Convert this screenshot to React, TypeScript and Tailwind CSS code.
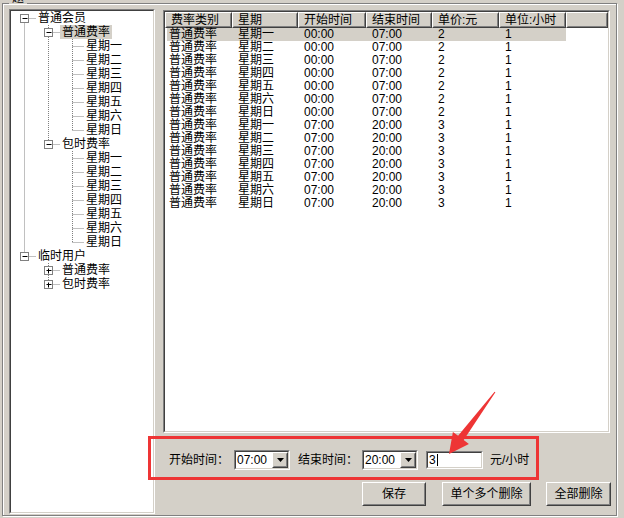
import type { ReactNode } from 'react'

const days = ['星期一', '星期二', '星期三', '星期四', '星期五', '星期六', '星期日']

interface TreeRow {
  level: 0 | 1 | 2
  label: string
  selected?: boolean
}

const treeRows: TreeRow[] = [
  { level: 0, label: '普通会员' },
  { level: 1, label: '普通费率', selected: true },
  ...days.map((d) => ({ level: 2 as const, label: d })),
  { level: 1, label: '包时费率' },
  ...days.map((d) => ({ level: 2 as const, label: d })),
  { level: 0, label: '临时用户' },
  { level: 1, label: '普通费率' },
  { level: 1, label: '包时费率' },
]

// expand boxes: [row, level, expanded]
const boxes: [number, number, boolean][] = [
  [0, 0, true],
  [1, 1, true],
  [9, 1, true],
  [17, 0, true],
  [18, 1, false],
  [19, 1, false],
]

const rates = [
  ...days.map((d) => ['普通费率', d, '00:00', '07:00', '2', '1']),
  ...days.map((d) => ['普通费率', d, '07:00', '20:00', '3', '1']),
]

const columns = [
  { title: '费率类别', w: 'w-[67px]', cw: 'w-[65px] pl-[2px]' },
  { title: '星期', w: 'w-[66px]', cw: 'w-[66px] pl-[6px]' },
  { title: '开始时间', w: 'w-[68px]', cw: 'w-[68px] pl-[6px]' },
  { title: '结束时间', w: 'w-[66px]', cw: 'w-[66px] pl-[6px]' },
  { title: '单价:元', w: 'w-[67px]', cw: 'w-[67px] pl-[6px]' },
  { title: '单位:小时', w: 'w-[67px]', cw: 'w-[67px] pl-[6px]' },
]

const Sunken = ({ className, children }: { className: string; children: ReactNode }) => (
  <div className={`border border-t-[#808080] border-l-[#808080] border-b-white border-r-white ${className}`}>
    <div className="h-full w-full border border-t-[#404040] border-l-[#404040] border-b-[#d4d0c8] border-r-[#d4d0c8]">
      {children}
    </div>
  </div>
)

const Raised = ({ className, children }: { className: string; children: ReactNode }) => (
  <div className={`border border-t-white border-l-white border-b-[#404040] border-r-[#404040] ${className}`}>
    <div className="flex h-full w-full items-center justify-center border border-t-transparent border-l-transparent border-b-[#808080] border-r-[#808080]">
      {children}
    </div>
  </div>
)

const TreeLines = () => {
  const cy = (i: number) => 7.5 + 14 * i
  const xs = [13.5, 37.5, 61.5]
  return (
    <svg className="absolute left-0 top-0" width="142" height="300">
      <g stroke="#808080" strokeWidth="1" strokeDasharray="1 1" fill="none">
        <line x1={xs[0]} y1={cy(0)} x2={xs[0]} y2={cy(17)} />
        <line x1={xs[1]} y1={14} x2={xs[1]} y2={cy(9)} />
        <line x1={xs[1]} y1={252} x2={xs[1]} y2={cy(19)} />
        <line x1={xs[2]} y1={28} x2={xs[2]} y2={cy(8)} />
        <line x1={xs[2]} y1={140} x2={xs[2]} y2={cy(16)} />
        {treeRows.map((r, i) => (
          <line key={i} x1={xs[r.level]} y1={cy(i)} x2={xs[r.level] + 12} y2={cy(i)} />
        ))}
      </g>
      {boxes.map(([row, level, open]) => {
        const x = xs[level]
        const y = cy(row)
        return (
          <g key={row}>
            <rect x={x - 4} y={y - 4} width="8" height="8" fill="#fff" stroke="#808080" />
            <line x1={x - 2} y1={y} x2={x + 3} y2={y} stroke="#000" />
            {!open && <line x1={x} y1={y - 2} x2={x} y2={y + 3} stroke="#000" />}
          </g>
        )
      })}
    </svg>
  )
}

const Combo = ({ value }: { value: string }) => (
  <Sunken className="h-[20px] w-[56px]">
    <div className="flex h-full items-center bg-white">
      <span className="flex-1 pl-[1px] leading-[16px]">{value}</span>
      <Raised className="h-[16px] w-[16px] bg-[#d4d0c8]">
        <svg width="7" height="4" viewBox="0 0 7 4">
          <path d="M0 0h7L3.5 4z" fill="#000" />
        </svg>
      </Raised>
    </div>
  </Sunken>
)

export default function App() {
  return (
    <div className="relative h-[518px] w-[624px] overflow-hidden bg-[#d4d0c8] pl-[2px] pt-[3px] font-['Liberation_Sans','Noto_Sans_CJK_SC',sans-serif] text-[12px] text-black">
      {/* group box */}
      <div className="relative flex h-[513px] w-[615px] items-start border border-[#808080] shadow-[inset_1px_1px_0_#fff,1px_1px_0_#fff]">
        <span className="absolute left-[6px] top-[-12px] bg-[#d4d0c8] px-[3px] leading-[12px]">题</span>

        {/* tree */}
        <Sunken className="ml-[6px] mt-[5px] h-[505px] w-[146px]">
          <div className="relative h-full bg-white">
            <TreeLines />
            <div className="relative">
              {treeRows.map((r, i) => (
                <div
                  key={i}
                  className={`flex h-[14px] items-center leading-[14px] ${
                    r.level === 0 ? 'pl-[25px]' : r.level === 1 ? 'pl-[49px]' : 'pl-[73px]'
                  }`}
                >
                  <span className={`px-[2px] ${r.selected ? 'bg-[#d4d0c8]' : ''}`}>{r.label}</span>
                </div>
              ))}
            </div>
          </div>
        </Sunken>

        {/* right side */}
        <div className="ml-[8px] mt-[6px] flex w-[448px] flex-col">
          <Sunken className="h-[423px] w-[447px]">
            <div className="h-full bg-white">
              <div className="flex h-[16px]">
                {columns.map((c) => (
                  <Raised key={c.title} className={`${c.w} h-[16px] bg-[#d4d0c8]`}>
                    <span className="w-full pl-[4px] leading-[14px]">{c.title}</span>
                  </Raised>
                ))}
                <Raised className="h-[16px] flex-1 bg-[#d4d0c8]">
                  <span />
                </Raised>
              </div>
              {rates.map((row, i) => (
                <div key={i} className={`ml-[2px] flex h-[13px] w-[399px] leading-[13px] ${i === 0 ? 'bg-[#d4d0c8]' : ''}`}>
                  {row.map((cell, j) => (
                    <span key={j} className={`${columns[j].cw} shrink-0 ${j === 5 ? 'w-[65px]' : ''}`}>
                      {cell}
                    </span>
                  ))}
                </div>
              ))}
            </div>
          </Sunken>

          {/* time controls */}
          <div className="mt-[17px] flex items-center pl-[6px]">
            <span className="w-[65px] leading-[14px]">开始时间：</span>
            <Combo value="07:00" />
            <span className="ml-[8px] w-[64px] leading-[14px]">结束时间：</span>
            <Combo value="20:00" />
            <Sunken className="ml-[8px] h-[18px] w-[57px]">
              <div className="flex h-full items-center bg-white pl-[1px] leading-[14px]">
                3<span className="ml-[1px] h-[12px] w-[1px] bg-black" />
              </div>
            </Sunken>
            <span className="ml-[7px] leading-[14px]">元/小时</span>
          </div>

          {/* buttons */}
          <div className="mt-[12px] flex pl-[199px]">
            <Raised className="h-[24px] w-[64px]">保存</Raised>
            <Raised className="ml-[16px] h-[24px] w-[89px]">单个多个删除</Raised>
            <Raised className="ml-[15px] h-[24px] w-[65px]">全部删除</Raised>
          </div>
        </div>
      </div>

      {/* annotation */}
      <div className="pointer-events-none absolute left-[148px] top-[436px] h-[44px] w-[391px] border-[3px] border-[#ee3535]" />
      <svg className="pointer-events-none absolute left-0 top-0" width="624" height="518">
        <polygon
          points="495.4,392.3 463.7,440 468.9,443.9 449,454 452.9,431.9 458.1,435.8 494.6,391.7"
          fill="#ee3535"
        />
      </svg>
    </div>
  )
}
